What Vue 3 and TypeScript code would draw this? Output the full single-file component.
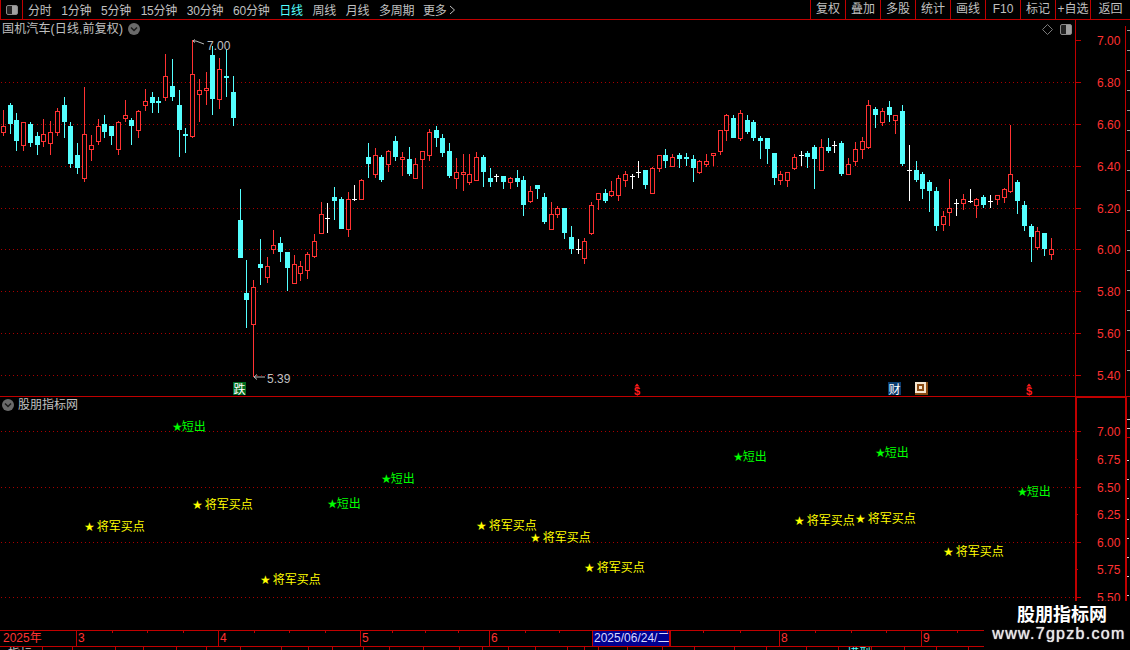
<script setup lang="ts">
type Candle = { cx: number; kind: string; h: number; t: number; b: number; l: number }

function parse(raw: string, xOff: number, yOff: number): Candle[] {
  return raw.trim().split(/\s*;\s*/).filter(Boolean).map((row) => {
    const p = row.trim().split(/\s+/)
    const n = p.slice(2).map(Number)
    return {
      cx: Math.floor(Number(p[0]) / 3 + xOff),
      kind: p[1],
      h: Math.round(yOff + n[0] / 3),
      t: Math.round(yOff + n[1] / 3),
      b: Math.round(yOff + n[2] / 3),
      l: Math.round(yOff + n[3] / 3),
    }
  })
}

const segA = `10 r 210 258 278 288;31 c 189 195 252 282;49 c 220 240 303 333;70 r 245 246 318 333;91 c 247 252 309 321;
112 c 277 288 315 345;130 r 237 282 305 321;151 r 243 276 311 345;172 r 205 213 278 288;193 c 171 195 246 294;
211 c 246 258 372 384;232 c 309 345 384 402;253 r 141 282 416 426;274 r 285 316 329 363;295 r 237 258 305 315;
313 c 225 252 276 294;334 c 258 258 288 315;355 r 243 246 329 345;376 r 180 225 236 246;394 c 234 240 258 315;
415 r 210 213 272 294;436 r 147 184 197 213;457 c 156 171 189 219;475 c 171 183 188 219;496 r 42 108 173 183;
517 c 57 138 171 183;538 c 151 195 270 351;556 c 264 282 288 339;577 r 0 102 290 293;598 r 117 150 164 246;
619 r 96 144 152 195;637 c 18 45 177 225;658 r 54 87 179 207;679 c 28 108 114 171;700 c 108 156 234 258`

const segB = `31 c 207 300 414 414;49 c 420 519 540 624;70 r 480 502 615 771;91 c 357 432 444 495;112 r 411 438 474 489;
130 r 330 375 390 402;151 c 351 369 396 426;172 c 396 396 444 513;193 r 405 432 492 492;211 r 423 438 462 483;
232 r 396 402 453 477;253 r 342 363 411 414;274 r 246 282 342 342;292 w 249 294 297 339;313 c 201 231 243 300;
334 c 231 237 327 327;355 r 216 237 330 351;373 w 195 237 240 243;394 r 177 180 240 240;415 c 69 111 132 174;
436 r 84 105 165 174;454 c 105 111 180 186;475 r 90 93 135 156;496 c 48 63 111 123;517 r 96 111 120 168;
538 c 81 117 162 168;556 r 114 132 177 177;577 r 93 93 120 207;598 r 27 36 108 123;619 c 18 30 54 81;
637 c 42 54 99 111;658 c 69 93 168 174;679 r 114 156 177 207;700 r 102 156 165 213;718 r 102 162 189 195;
739 r 96 111 183 183;760 c 105 111 156 201;781 c 144 174 186 201;799 w 162 168 171 186`

const segC = `40 c 228 228 246 267;61 r 231 234 248 267;82 c 210 234 246 261;100 c 228 240 315 348;121 r 258 273 306 309;
142 c 255 255 267 297;163 c 279 291 366 372;184 r 306 342 390 390;202 r 318 324 345 354;223 c 324 324 399 417;
244 c 378 411 447 462;265 w 417 447 450 462;283 r 414 423 477 492;304 r 306 315 402 405;325 r 279 279 300 330;
346 c 267 279 303 309;364 r 243 273 288 291;385 r 225 234 288 303;406 r 213 222 243 261;427 w 222 228 231 267;
445 w 183 216 219 234;466 c 210 210 255 267;487 r 201 204 282 282;508 r 165 165 207 216;526 c 147 165 183 204;
547 r 162 171 201 201;568 c 159 165 177 204;589 c 159 171 177 198;610 c 165 177 204 246;628 r 180 183 219 222;
649 r 162 183 195 201;670 r 159 159 168 198;691 r 90 90 156 165;709 r 42 45 93 123;730 c 45 54 114 114;
751 r 30 39 117 123;772 c 45 60 96 102;790 c 60 66 114 123;811 c 108 114 123 177;832 c 114 114 147 192`

const segD = `13 c 189 189 264 285;31 r 243 252 273 285;52 r 246 246 273 291;73 r 192 201 237 240;94 w 183 195 198 228;
112 c 183 189 201 234;133 c 165 171 207 297;154 r 147 171 243 243;175 c 144 171 183 189;193 w 153 165 168 189;
214 c 153 159 252 258;235 r 204 222 255 255;256 r 156 177 216 228;277 r 141 153 180 207;295 r 30 45 174 177;
316 c 51 57 75 114;337 r 54 63 99 108;358 c 33 51 75 96;376 r 75 75 93 132;397 c 45 63 222 228;
418 w 165 240 243 333;439 c 213 240 270 276;457 c 246 252 297 327;478 c 270 276 303 366;499 c 291 303 408 423;
520 r 363 378 405 423;538 r 267 354 369 408;559 w 327 339 342 378;580 r 312 327 342 360;601 w 297 333 336 339;
619 r 324 327 348 384;640 c 315 321 345 354;661 w 315 333 336 354;682 r 315 315 330 345;703 r 294 297 324 339;
721 r 105 252 306 309;742 c 270 276 333 372;763 c 333 345 408 423;784 c 402 408 441 516;802 r 411 423 474 480;
823 c 429 429 477 498;844 r 444 477 495 510`

const candles: Candle[] = [
  ...parse(segA, 0, 40),
  ...parse(segB, 230, 120),
  ...parse(segC, 490, 100),
  ...parse(segD, 770, 90),
]

const periods = ['分时', '1分钟', '5分钟', '15分钟', '30分钟', '60分钟', '日线', '周线', '月线', '多周期']
const tools = ['复权', '叠加', '多股', '统计', '画线', 'F10', '标记', '+自选', '返回']

const mainPrices = ['7.00', '6.80', '6.60', '6.40', '6.20', '6.00', '5.80', '5.60', '5.40'].map((label, i) => ({
  label,
  y: Math.round(40.2 + i * 41.85),
}))
const mainGrid = mainPrices.slice(1)
const subPrices = ['7.00', '6.75', '6.50', '6.25', '6.00', '5.75', '5.50'].map((label, i) => ({
  label,
  y: Math.round(431.3 + i * 27.6),
  major: i % 2 === 0,
}))
const edgeTicks = Array.from({ length: 18 }, (_, i) => 30 + i * 20)
const subEdgeTicks = [460, 479, 498, 519, 538, 557, 576, 595]

const shortSells = [[172, 426], [381, 478], [327, 503], [733, 456], [875, 452], [1017, 491]]
const buys = [[84, 526], [192, 504], [260, 579], [476, 525], [530, 537], [584, 567], [794, 520], [855, 518], [943, 551]]

const timeCells = [
  { w: 76, text: '2025年' },
  { w: 142, text: '3' },
  { w: 142, text: '4' },
  { w: 129, text: '5' },
  { w: 103, text: '6' },
  { w: 78, text: '2025/06/24/二', active: true },
  { w: 109, text: '' },
  { w: 142, text: '8' },
  { w: 209, text: '9' },
]
const minorTicks = [112, 147, 183, 254, 289, 325, 392, 425, 458, 525, 559, 631, 667, 703, 740, 815, 851, 886, 957, 992]

const edges = [0, 43, 73, 116, 144, 177, 207, 241, 282, 309, 333, 364, 390, 424, 460, 483, 509, 536, 568, 585, 599, 628, 663, 695, 735, 767, 807, 839, 872, 905, 937, 969, 1130]
const footerCells = edges.slice(1).map((e, i) => ({
  w: e - edges[i],
  text: i === 0 ? '指标' : i === 27 ? '模型' : '',
  hot: i === 27,
}))
</script>

<template>
  <div class="app">
    <header class="toolbar">
      <div class="toggle-cell">
        <span class="toggle"></span>
      </div>
      <nav class="periods">
        <span v-for="p in periods" :key="p" :class="{ on: p === '日线' }">{{ p }}</span>
        <span class="more">更多
          <svg width="7" height="10" viewBox="0 0 7 10"><path d="M1 1l4.500 4-4.500 4" fill="none" stroke="#c0c0c0" /></svg>
        </span>
      </nav>
      <div class="tools">
        <span v-for="t in tools" :key="t" class="tool">{{ t }}</span>
      </div>
    </header>

    <section class="pane pane-main">
      <div class="pane-title main-title">
        <span>国机汽车(日线,前复权)</span>
        <svg class="round" width="12" height="12" viewBox="0 0 12 12">
          <circle cx="6" cy="6" r="6" fill="#6a6a6a" />
          <path d="M3 4.500l3 3 3-3" fill="none" stroke="#1a1a1a" stroke-width="1.500" />
        </svg>
      </div>
      <div class="corner">
        <svg width="11" height="11" viewBox="0 0 11 11"><path d="M5.500.5l5 5-5 5-5-5z" fill="none" stroke="#7a7a7a" /></svg>
        <span class="toggle small"></span>
      </div>
      <svg class="chart" width="1075" height="376" viewBox="0 20 1075 376">
        <line v-for="g in mainGrid" :key="g.label" class="dots" x1="1" x2="1075" :y1="g.y + 0.5" :y2="g.y + 0.5" />
        <g shape-rendering="crispEdges">
          <g v-for="(c, i) in candles" :key="i" :class="c.kind">
            <template v-if="c.kind === 'r'">
              <rect class="fill" :x="c.cx" :y="c.h" width="1" :height="Math.max(c.t - c.h, 0)" />
              <rect class="fill" :x="c.cx" :y="c.b" width="1" :height="Math.max(c.l - c.b, 0)" />
              <rect class="hollow" :x="c.cx - 1.5" :y="c.t + 0.5" width="4" :height="Math.max(c.b - c.t - 1, 1)" />
            </template>
            <template v-else>
              <rect class="fill" :x="c.cx" :y="c.h" width="1" :height="Math.max(c.l - c.h, 1)" />
              <rect class="fill" :x="c.cx - 2" :y="c.t" width="5" :height="Math.max(c.b - c.t, 1)" />
            </template>
          </g>
        </g>
        <path class="arrow" d="M204 44l-8-3h-3m2-1.500l-2 1.500 2 1.500" />
        <text class="note" x="207" y="50">7.00</text>
        <path class="arrow" d="M265 377h-11m3-2.500l-3 2.500 3 2.500" />
        <text class="note" x="267" y="383">5.39</text>

        <rect x="233" y="382" width="13" height="13" fill="#006b1e" />
        <text class="mark" x="233.500" y="393.500">跌</text>
        <rect x="888" y="382" width="13" height="13" fill="#0b3c6e" />
        <text class="mark" x="888.500" y="393.500">财</text>
        <g shape-rendering="crispEdges">
          <rect x="915" y="382" width="13" height="13" fill="#8a4a12" />
          <rect x="915" y="382" width="11" height="11" fill="#f4e6d0" />
          <rect x="917" y="384" width="7" height="7" fill="#8a4a12" />
          <rect x="919" y="386" width="3" height="3" fill="#f4e6d0" />
        </g>
        <g v-for="x in [637, 1029]" :key="x">
          <path :d="`M${x - 2.500} 386.500h5l-2.500 -3z`" fill="#ff1a1a" />
          <text class="dollar" :x="x" y="394.500">$</text>
        </g>
      </svg>
      <svg class="axis" width="55" height="376" viewBox="1075 20 55 376" shape-rendering="crispEdges">
        <rect x="1075" y="20" width="1" height="376" fill="#c00000" />
        <rect x="1125" y="26" width="1" height="370" fill="#c00000" />
        <rect v-for="y in edgeTicks" :key="y" x="1127" :y="y" width="3" height="1" fill="#9a9a9a" />
        <g v-for="p in mainPrices" :key="p.label">
          <rect x="1076" :y="p.y" width="5" height="1" fill="#c00000" />
          <text class="price" x="1097" :y="p.y + 5">{{ p.label }}</text>
        </g>
      </svg>
    </section>

    <section class="pane pane-sub">
      <div class="pane-title sub-title">
        <svg class="round" width="12" height="12" viewBox="0 0 12 12">
          <circle cx="6" cy="6" r="6" fill="#6a6a6a" />
          <path d="M3 4.500l3 3 3-3" fill="none" stroke="#1a1a1a" stroke-width="1.500" />
        </svg>
        <span>股朋指标网</span>
      </div>
      <svg class="chart" width="1075" height="233" viewBox="0 397 1075 233">
        <line v-for="p in subPrices" :key="p.label" v-show="p.major" class="dots" x1="1" x2="1075" :y1="p.y + 0.5" :y2="p.y + 0.5" />
        <g v-for="s in shortSells" :key="s[0]">
          <text class="sig green" :x="s[0]" :y="s[1] + 5"><tspan class="star">★</tspan><tspan dx="-1">短出</tspan></text>
        </g>
        <g v-for="s in buys" :key="s[0]">
          <text class="sig yellow" :x="s[0]" :y="s[1] + 5"><tspan class="star">★</tspan><tspan dx="2">将军买点</tspan></text>
        </g>
      </svg>
      <svg class="axis" width="55" height="233" viewBox="1075 397 55 233" shape-rendering="crispEdges">
        <rect x="1075" y="397" width="2" height="233" fill="#c00000" />
        <rect x="1075" y="397" width="52" height="1" fill="#c00000" />
        <rect x="1125" y="397" width="2" height="233" fill="#c00000" />
        <rect x="1127" y="419" width="3" height="1" fill="#d0d0d0" />
        <rect x="1127" y="428" width="3" height="1" fill="#d0d0d0" />
        <rect x="1127" y="437" width="3" height="1" fill="#c00000" />
        <rect v-for="y in subEdgeTicks" :key="y" x="1127" :y="y" width="2" height="1" fill="#d0d0d0" />
        <g v-for="p in subPrices" :key="p.label">
          <rect x="1077" :y="p.y" :width="p.major ? 4 : 1" height="1" fill="#c00000" />
          <text class="price" x="1097" :y="p.y + 5">{{ p.label }}</text>
        </g>
      </svg>
    </section>

    <div class="timeline">
      <span
        v-for="(c, i) in timeCells"
        :key="i"
        class="time-cell"
        :class="{ active: c.active, first: i === 0 }"
        :style="{ width: c.w + 'px' }"
      >{{ c.text }}</span>
      <i v-for="x in minorTicks" :key="x" class="minor" :style="{ left: x + 'px' }"></i>
    </div>

    <footer class="footer">
      <span
        v-for="(f, i) in footerCells"
        :key="i"
        class="foot-cell"
        :class="{ hot: f.hot }"
        :style="{ width: f.w + 'px' }"
      >{{ f.text }}</span>
    </footer>

    <div class="watermark">
      <strong>股朋指标网</strong>
      <span>www.7gpzb.com</span>
    </div>
  </div>
</template>

<style>
html, body { margin: 0; background: #000; }
</style>

<style scoped>
.app {
  position: relative;
  width: 1130px;
  height: 650px;
  overflow: hidden;
  background: #000;
  color: #c0c0c0;
  font: 12px "Liberation Sans", "Noto Sans CJK SC", sans-serif;
}
.toolbar {
  display: flex;
  align-items: center;
  height: 19px;
  border-bottom: 1px solid #c00000;
}
.toggle-cell {
  display: flex;
  align-items: center;
  justify-content: center;
  width: 23px;
  height: 19px;
  box-sizing: border-box;
  border-left: 1px solid #c00000;
  border-right: 1px solid #c00000;
}
.toggle {
  display: block;
  width: 10px;
  height: 8px;
  border: 1px solid #8a8a8a;
  border-radius: 2px;
  background: linear-gradient(90deg, #222 0 50%, #a0a0a0 50% 100%);
}
.toggle.small { height: 9px; }
.periods {
  display: flex;
  align-items: center;
  gap: 9.7px;
  margin-left: 5px;
  flex: 1;
  white-space: nowrap;
  letter-spacing: -0.22px;
}
.periods .on { color: #54ffff; }
.more { display: inline-flex; align-items: center; gap: 3px; margin-left: -1px; }
.tools { display: flex; height: 19px; }
.tool {
  width: 34px;
  border-left: 1px solid #c00000;
  text-align: center;
  line-height: 19px;
  white-space: nowrap;
}
.tool:last-child { width: 39px; }
.pane { position: relative; display: flex; }
.pane-main { height: 376px; border-bottom: 1px solid #c00000; }
.pane-sub { height: 233px; }
.chart, .axis { display: block; flex: none; }
.pane-title {
  position: absolute;
  display: flex;
  align-items: center;
  white-space: nowrap;
  line-height: 16px;
}
.main-title { left: 2px; top: 1px; gap: 5px; letter-spacing: 0.15px; }
.sub-title { left: 2px; top: 0; gap: 4px; }
.round { flex: none; }
.corner {
  position: absolute;
  left: 1042px;
  top: 4px;
  display: flex;
  align-items: center;
  gap: 7px;
}
.dots {
  stroke: #a80000;
  stroke-width: 1;
  stroke-dasharray: 1 3;
  shape-rendering: crispEdges;
}
.r .fill { fill: #ff3232; }
.r .hollow { fill: #000; stroke: #ff3232; stroke-width: 1; }
.c .fill { fill: #54ffff; }
.w .fill { fill: #fff; }
.arrow { fill: none; stroke: #b8b8b8; stroke-width: 1; }
.note { fill: #c0c0c0; font-size: 12px; }
.mark { fill: #fff; font-size: 12px; }
.dollar { fill: #ff1a1a; font-size: 11px; font-weight: 700; text-anchor: middle; }
.price { fill: #ff3232; font-size: 12px; }
.sig { font-size: 12px; }
.star { font-family: "DejaVu Sans", sans-serif; font-size: 12px; }
.green { fill: #00ff00; }
.yellow { fill: #ffff00; }
.timeline {
  position: relative;
  display: flex;
  height: 15px;
  border-top: 1px solid #c00000;
  border-bottom: 1px solid #c00000;
  color: #ff3232;
  line-height: 15px;
}
.time-cell {
  box-sizing: border-box;
  flex: none;
  padding-left: 1px;
  border-left: 1px solid #c00000;
  white-space: nowrap;
  overflow: hidden;
}
.time-cell.first { border-left: 0; padding-left: 3px; }
.time-cell.active {
  background: #000090;
  color: #d8d8ff;
  border-right: 1px solid #c00000;
}
.minor {
  position: absolute;
  top: 0;
  width: 1px;
  height: 2px;
  background: #c00000;
}
.footer { display: flex; height: 3px; overflow: hidden; line-height: 14px; }
.foot-cell {
  box-sizing: border-box;
  flex: none;
  padding-left: 8px;
  border-right: 1px solid #c00000;
  overflow: hidden;
  white-space: nowrap;
}
.foot-cell.hot { color: #54ffff; }
.watermark {
  position: absolute;
  right: 0;
  bottom: 0;
  box-sizing: border-box;
  width: 146px;
  height: 49px;
  padding-top: 5px;
  background: #000;
  color: #fff;
  display: flex;
  flex-direction: column;
  align-items: center;
  text-align: center;
}
.watermark strong { font-size: 18px; line-height: 18px; margin-left: 10px; }
.watermark span {
  font-size: 16px;
  line-height: 19px;
  letter-spacing: 1.3px;
  margin-left: 4px;
  color: #e8e8e8;
  text-shadow: 0 0 1px #fff;
  white-space: nowrap;
}
</style>
